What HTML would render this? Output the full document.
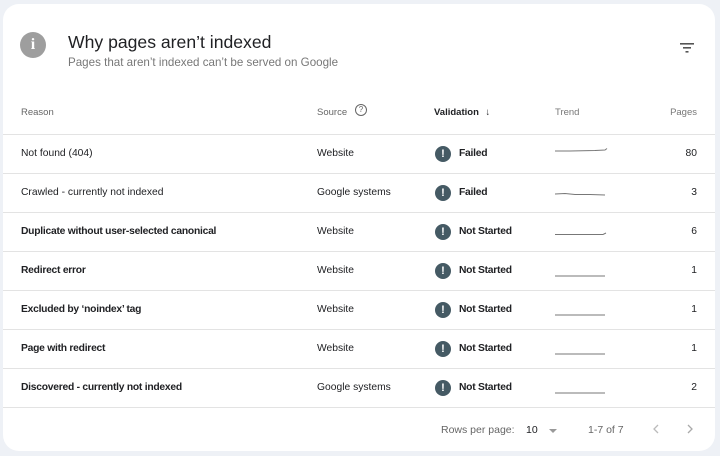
<!DOCTYPE html>
<html><head><style>
body{margin:0;width:720px;height:456px;background:#eef1f6;font-family:"Liberation Sans",Arial,sans-serif;overflow:hidden}
.card{position:absolute;left:3px;top:4px;width:712px;height:447px;background:#fff;border-radius:16px;overflow:hidden}
.t{position:absolute;white-space:nowrap}
.row{position:absolute;left:0;width:712px;height:39px;border-top:1px solid #e3e3e3;font-size:10.3px;color:#202124}
.row span{position:absolute;top:13px}
.b{font-weight:bold;letter-spacing:-0.25px}
.ic{position:absolute;left:432px;top:11px;width:16px;height:16px;border-radius:50%;background:#455a64;color:#fff;font-size:11px;font-weight:bold;text-align:center;line-height:16px;letter-spacing:0}
.st{left:456px}
.tr{position:absolute;left:552px;top:20px}
.pg{right:18px;text-align:right}
</style></head><body>
<div class="card">
<div style="position:absolute;left:17px;top:28px;width:26px;height:26px;border-radius:50%;background:#9e9e9e;color:#fff;font-weight:bold;font-size:16px;text-align:center;line-height:26px;font-family:'Liberation Serif',serif">i</div>
<div class="t" style="left:65px;top:28px;font-size:17.6px;color:#202124">Why pages aren’t indexed</div>
<div class="t" style="left:65px;top:52px;font-size:11.6px;color:#777">Pages that aren’t indexed can’t be served on Google</div>
<svg style="position:absolute;left:677px;top:38px" width="16" height="12"><rect x="0" y="1" width="14" height="1.6" fill="#555"/><rect x="3" y="5" width="8" height="1.6" fill="#555"/><rect x="5.5" y="9" width="3" height="1.6" fill="#555"/></svg>
<div class="t" style="left:18px;top:103px;font-size:9.5px;color:#666">Reason</div>
<div class="t" style="left:314px;top:103px;font-size:9.5px;color:#666">Source</div>
<div style="position:absolute;left:352px;top:100px;width:10px;height:10px;border:1.2px solid #666;border-radius:50%;font-size:8px;text-align:center;line-height:10px;color:#666">?</div>
<div class="t" style="left:431px;top:103px;font-size:9.5px;color:#202124;font-weight:bold">Validation <span style="font-weight:normal;margin-left:4px">↓</span></div>
<div class="t" style="left:552px;top:103px;font-size:9.5px;color:#777">Trend</div>
<div class="t" style="right:18px;top:103px;font-size:9.5px;color:#777">Pages</div>

<div class="row" style="top:130px"><span style="left:18px">Not found (404)</span><span style="left:314px">Website</span><div class="ic">!</div><span class="st b">Failed</span><svg class="tr" width="54" height="6" style="top:12px"><path d="M0 4 L15 4 L40 3.5 L50 3 L52 1.5" stroke="#777" stroke-width="1" fill="none"/></svg><span class="pg">80</span></div>
<div class="row" style="top:169px"><span style="left:18px">Crawled - currently not indexed</span><span style="left:314px">Google systems</span><div class="ic">!</div><span class="st b">Failed</span><svg class="tr" width="54" height="6" style="top:18px"><path d="M0 2 L10 1.5 L20 2.5 L35 2.5 L50 3" stroke="#777" stroke-width="1" fill="none"/></svg><span class="pg">3</span></div>
<div class="row" style="top:208px"><span class="b" style="left:18px">Duplicate without user-selected canonical</span><span style="left:314px">Website</span><div class="ic">!</div><span class="st b">Not Started</span><svg class="tr" width="54" height="6" style="top:18px"><path d="M0 3.5 L48 3.5 L51 2" stroke="#777" stroke-width="1" fill="none"/></svg><span class="pg">6</span></div>
<div class="row" style="top:247px"><span class="b" style="left:18px">Redirect error</span><span style="left:314px">Website</span><div class="ic">!</div><span class="st b">Not Started</span><svg class="tr" width="54" height="6" style="top:21px"><path d="M0 3 L50 3" stroke="#777" stroke-width="1"/></svg><span class="pg">1</span></div>
<div class="row" style="top:286px"><span class="b" style="left:18px">Excluded by ‘noindex’ tag</span><span style="left:314px">Website</span><div class="ic">!</div><span class="st b">Not Started</span><svg class="tr" width="54" height="6" style="top:21px"><path d="M0 3 L50 3" stroke="#777" stroke-width="1"/></svg><span class="pg">1</span></div>
<div class="row" style="top:325px"><span class="b" style="left:18px">Page with redirect</span><span style="left:314px">Website</span><div class="ic">!</div><span class="st b">Not Started</span><svg class="tr" width="54" height="6" style="top:21px"><path d="M0 3 L50 3" stroke="#777" stroke-width="1"/></svg><span class="pg">1</span></div>
<div class="row" style="top:364px"><span class="b" style="left:18px">Discovered - currently not indexed</span><span style="left:314px">Google systems</span><div class="ic">!</div><span class="st b">Not Started</span><svg class="tr" width="54" height="6" style="top:21px"><path d="M0 3 L50 3" stroke="#777" stroke-width="1"/></svg><span class="pg">2</span></div>
<div style="position:absolute;left:0;top:403px;width:712px;border-top:1px solid #e3e3e3"></div>

<div class="t" style="left:438px;top:420px;font-size:10.5px;color:#666">Rows per page:</div>
<div class="t" style="left:523px;top:420px;font-size:10.5px;color:#202124">10</div>
<div style="position:absolute;left:546px;top:425px;width:0;height:0;border-left:4px solid transparent;border-right:4px solid transparent;border-top:4px solid #999"></div>
<div class="t" style="left:585px;top:420px;font-size:10.5px;color:#666">1-7 of 7</div>
<svg style="position:absolute;left:648px;top:419px" width="10" height="12"><path d="M7 2 L3 6 L7 10" stroke="#bbb" stroke-width="1.3" fill="none"/></svg>
<svg style="position:absolute;left:682px;top:419px" width="10" height="12"><path d="M3 2 L7 6 L3 10" stroke="#aaa" stroke-width="1.3" fill="none"/></svg>
</div>
</body></html>
